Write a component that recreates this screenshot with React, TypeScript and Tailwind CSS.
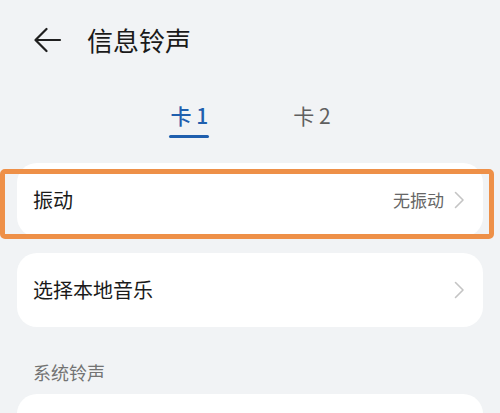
import React from "react";

const Chevron = () => (
  <svg width="11" height="18" viewBox="0 0 11 18" fill="none">
    <polyline points="1.5,1.5 9,9 1.5,16.5" stroke="#c4c4c4" strokeWidth="1.6" strokeLinecap="round" strokeLinejoin="round" />
  </svg>
);

export default function App() {
  return (
    <div
      className="w-[500px] h-[413px] bg-[#f1f3f5] overflow-hidden"
      style={{ fontFamily: '"Noto Sans CJK SC", "Noto Sans", sans-serif' }}
    >
      <div className="h-[80px] flex items-center pl-[34px]">
        <svg width="28" height="26" viewBox="0 0 28 26" fill="none">
          <path d="M26 13 H2 M12.5 2 L1.5 13 L12.5 24" stroke="#1f1f1f" strokeWidth="2.2" strokeLinecap="round" strokeLinejoin="round" />
        </svg>
        <span className="ml-[25px] text-[26px] leading-[34px] text-[#1a1a1a]">信息铃声</span>
      </div>

      <div className="mt-[21px] flex justify-center gap-[84px]">
        <div className="flex flex-col items-center">
          <span className="text-[21px] leading-[28px] text-[#1f5fae] font-medium">卡 1</span>
          <div className="mt-[6px] h-[3px] w-[40px] bg-[#1f5fae] rounded-full" />
        </div>
        <div className="flex flex-col items-center">
          <span className="text-[21px] leading-[28px] text-[#5f5f5f]">卡 2</span>
        </div>
      </div>

      <div className="mt-[25px] mx-[17px] relative">
        <div className="h-[74px] bg-white rounded-[20px] flex items-center pl-[16px] pr-[18px]">
          <span className="text-[20px] text-[#1a1a1a]">振动</span>
          <span className="ml-auto text-[17px] text-[#666666]">无振动</span>
          <span className="ml-[10px] flex items-center"><Chevron /></span>
        </div>
        <div className="absolute left-[-17px] right-[-11px] top-[6px] bottom-[-2px] border-[5px] border-[#ee9048] rounded-[5px] pointer-events-none" />
      </div>

      <div className="mt-[16px] mx-[17px] h-[74px] bg-white rounded-[20px] flex items-center pl-[16px] pr-[18px]">
        <span className="text-[20px] text-[#1a1a1a]">选择本地音乐</span>
        <span className="ml-auto flex items-center"><Chevron /></span>
      </div>

      <div className="mt-[33px] pl-[33px] text-[18px] leading-[24px] text-[#737373]">系统铃声</div>

      <div className="mt-[10px] mx-[17px] h-[74px] bg-white rounded-[20px]" />
    </div>
  );
}
